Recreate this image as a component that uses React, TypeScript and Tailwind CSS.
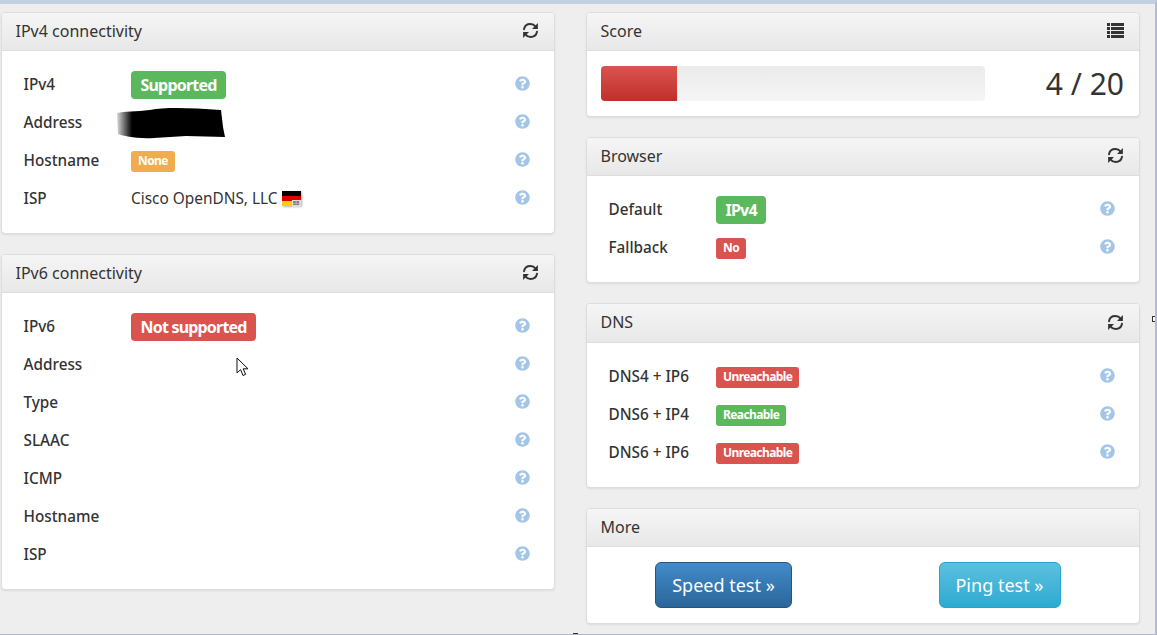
import type { ReactElement, ReactNode } from "react";
import { FaQuestionCircle } from "react-icons/fa";

type PanelPropsType = {
  title: string;
  icon?: "refresh" | "list";
  headerHeight?: string;
  children: ReactNode;
};

type RowPropsType = {
  label: string;
  children?: ReactNode;
};

const RefreshIcon = (): ReactElement => (
  <svg width="17" height="17" viewBox="0 0 17 17" fill="none" className="text-[#333]">
    <path d="M2 7.2C2.6 4 5.2 2 8.4 2c2.2 0 4 1 5.2 2.6" stroke="currentColor" strokeWidth="1.9" strokeLinecap="round" />
    <path d="M15.9 1v5.9H10z" fill="currentColor" />
    <path d="M15 9.8c-.6 3.2-3.2 5.2-6.4 5.2-2.2 0-4-1-5.2-2.6" stroke="currentColor" strokeWidth="1.9" strokeLinecap="round" />
    <path d="M1.1 16v-5.9H7z" fill="currentColor" />
  </svg>
);

const ListIcon = (): ReactElement => (
  <svg width="17" height="15" viewBox="0 0 17 15" fill="#333">
    <rect x="0" y="0" width="3" height="3" />
    <rect x="4" y="0" width="13" height="3" />
    <rect x="0" y="4" width="3" height="3" />
    <rect x="4" y="4" width="13" height="3" />
    <rect x="0" y="8" width="3" height="3" />
    <rect x="4" y="8" width="13" height="3" />
    <rect x="0" y="12" width="3" height="3" />
    <rect x="4" y="12" width="13" height="3" />
  </svg>
);

const Panel = ({ title, icon, headerHeight = "h-[38px]", children }: PanelPropsType): ReactElement => (
  <section className="rounded-[4px] border border-[#ddd] bg-white shadow-[0_1px_2px_rgba(0,0,0,0.08)]">
    <header className={`flex ${headerHeight} items-center justify-between rounded-t-[3px] border-b border-[#ddd] bg-gradient-to-b from-[#f5f5f5] to-[#e8e8e8] pb-[2px] pl-[13.5px] pr-[15px] text-[16px] text-[#333]`}>
      <span>{title}</span>
      {icon === "refresh" && <RefreshIcon />}
      {icon === "list" && <ListIcon />}
    </header>
    {children}
  </section>
);

const Row = ({ label, children }: RowPropsType): ReactElement => (
  <div className="flex h-[38px] items-center pl-[21.5px] pr-[24px]">
    <span className="w-[107.5px] shrink-0 pb-[1px] text-[15.3px] font-medium text-[#333]">{label}</span>
    <div className="flex flex-1 items-center">{children}</div>
    <FaQuestionCircle className="mb-[3px] text-[15px] text-[#a3c6e8]" />
  </div>
);

const bigLabel = "inline-flex h-[28px] items-center rounded-[4px] px-[9.5px] text-[16px] font-bold tracking-[-0.8px] text-white";
const smallLabel = "inline-flex h-[21px] items-center rounded-[3px] px-[7px] text-[12px] font-bold tracking-[-0.6px] text-white";

const GermanFlag = (): ReactElement => (
  <span className="relative ml-[4px] inline-flex h-[15px] w-[19px] flex-col shadow-[1px_1px_2px_rgba(0,0,0,0.3)]">
    <span className="h-1/3 bg-black" />
    <span className="h-1/3 bg-[#dd0000]" />
    <span className="h-1/3 bg-[#ffce00]" />
    <span className="absolute -bottom-[1px] right-0 bg-[#ddd] px-[1px] text-[6px] leading-[7px] text-[#333]">88</span>
  </span>
);

const Redaction = (): ReactElement => (
  <svg width="110" height="32" viewBox="0 0 110 32" className="-ml-[15px]">
    <defs>
      <linearGradient id="redactionFade" x1="0" x2="1" y1="0" y2="0">
        <stop offset="0" stopColor="#000" stopOpacity="0.15" />
        <stop offset="0.14" stopColor="#000" />
        <stop offset="1" stopColor="#000" />
      </linearGradient>
    </defs>
    <path d="M1 6 C8 4 20 5 34 3 C50 0 75 1 105 3 L107 20 L109 30 L70 29 L38 31 C20 32 8 29 2 27Z" fill="url(#redactionFade)" />
  </svg>
);

const Cursor = (): ReactElement => (
  <svg width="13" height="20" viewBox="0 0 13 20" className="absolute left-[236px] top-[353px]">
    <path d="M1 1v15l3.6-3.4L7 18.5l2.6-1.1-2.4-5.6h4.8z" fill="#fff" stroke="#111" strokeWidth="1" />
  </svg>
);

export default function App(): ReactElement {
  return (
    <div
      className="relative h-[635px] w-[1157px] overflow-hidden border-t-[4px] border-r-[2px] border-b-[1px] border-[#c3cfe2] border-b-[#a9b8d0] border-r-[#aebcd4] bg-[#eeeeee] text-[#333]"
      style={{ fontFamily: '"Noto Sans", "Open Sans", sans-serif' }}
    >
      <div className="flex items-start gap-[31px] pl-[1px] pt-[8px]">
        <div className="flex w-[554px] flex-col gap-[20px]">
          <Panel title="IPv4 connectivity" icon="refresh">
            <div className="py-[15px]">
              <Row label="IPv4"><span className={`${bigLabel} bg-[#5cb85c]`}>Supported</span></Row>
              <Row label="Address"><Redaction /></Row>
              <Row label="Hostname"><span className={`${smallLabel} bg-[#f0ad4e]`}>None</span></Row>
              <Row label="ISP">
                <span className="text-[15.4px]">Cisco OpenDNS, LLC</span>
                <GermanFlag />
              </Row>
            </div>
          </Panel>
          <Panel title="IPv6 connectivity" icon="refresh">
            <div className="py-[15px]">
              <Row label="IPv6"><span className={`${bigLabel} bg-[#d9534f]`}>Not supported</span></Row>
              <Row label="Address" />
              <Row label="Type" />
              <Row label="SLAAC" />
              <Row label="ICMP" />
              <Row label="Hostname" />
              <Row label="ISP" />
            </div>
          </Panel>
        </div>

        <div className="flex w-[554px] flex-col gap-[20px]">
          <Panel title="Score" icon="list">
            <div className="flex items-center justify-between py-[15px] pl-[14px] pr-[15px]">
              <div className="h-[35px] w-[384px] overflow-hidden rounded-[4px] bg-gradient-to-b from-[#ebebeb] to-[#f5f5f5]">
                <div className="h-full w-[76px] bg-gradient-to-b from-[#d9534f] to-[#c12e2a]" />
              </div>
              <span className="text-[30px] leading-[35px]">4 / 20</span>
            </div>
          </Panel>
          <Panel title="Browser" icon="refresh">
            <div className="py-[15px]">
              <Row label="Default"><span className={`${bigLabel} bg-[#5cb85c]`}>IPv4</span></Row>
              <Row label="Fallback"><span className={`${smallLabel} bg-[#d9534f]`}>No</span></Row>
            </div>
          </Panel>
          <Panel title="DNS" icon="refresh" headerHeight="h-[39px]">
            <div className="py-[15px]">
              <Row label="DNS4 + IP6"><span className={`${smallLabel} bg-[#d9534f]`}>Unreachable</span></Row>
              <Row label="DNS6 + IP4"><span className={`${smallLabel} bg-[#5cb85c]`}>Reachable</span></Row>
              <Row label="DNS6 + IP6"><span className={`${smallLabel} bg-[#d9534f]`}>Unreachable</span></Row>
            </div>
          </Panel>
          <Panel title="More">
            <div className="grid grid-cols-2 justify-items-center py-[15px] pr-[2px]">
              <button className="-ml-[2px] h-[46px] w-[137px] rounded-[6px] border border-[#245580] bg-gradient-to-b from-[#428bca] to-[#2b669a] text-[18px] text-white">Speed test »</button>
              <button className="h-[46px] w-[122px] rounded-[6px] border border-[#28a4c9] bg-gradient-to-b from-[#5bc0de] to-[#2aabd2] text-[18px] text-white">Ping test »</button>
            </div>
          </Panel>
        </div>
      </div>
      <Cursor />
      <span className="absolute left-[1153px] top-[313px] h-[4px] w-[2px] bg-white ring-1 ring-[#333]" />
      <span className="absolute bottom-0 left-[573px] h-[1px] w-[5px] bg-[#333]" />
    </div>
  );
}
